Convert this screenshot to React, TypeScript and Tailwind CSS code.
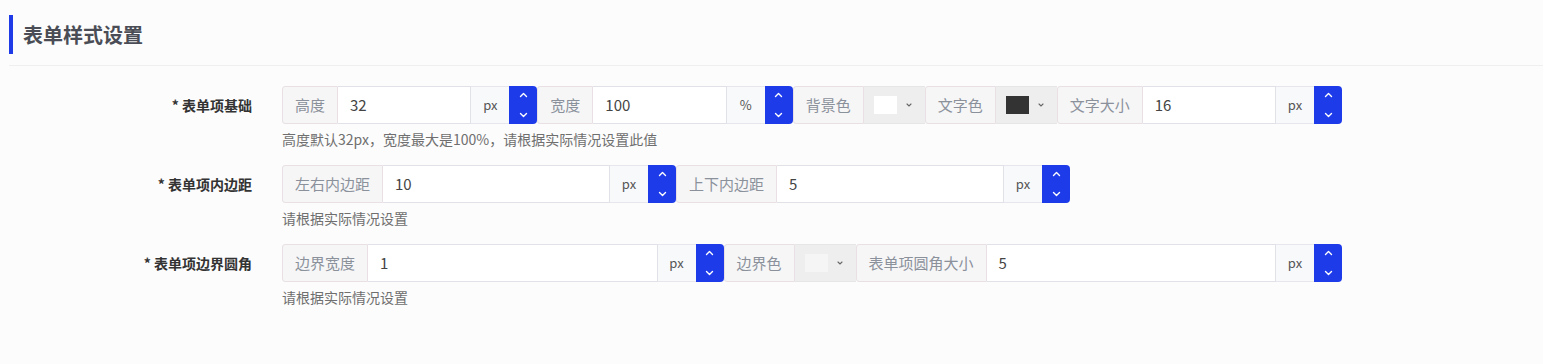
import React from "react";

const F = "font-['Noto_Sans_CJK_SC','Noto_Sans',sans-serif]";

function Addon({ text }: { text: string }) {
  return (
    <div className="flex h-full shrink-0 items-center rounded-l-[3px] border border-[#e8e0e4] bg-[#f6f6f7] px-3 text-[15px] text-[#8b919b]">
      {text}
    </div>
  );
}

function Chevron({ up }: { up?: boolean }) {
  return (
    <svg width="9" height="6" viewBox="0 0 9 6" fill="none">
      <polyline
        points={up ? "1.5,4.5 4.5,1.5 7.5,4.5" : "1.5,1.5 4.5,4.5 7.5,1.5"}
        stroke="white"
        strokeWidth="1.4"
        strokeLinecap="round"
        strokeLinejoin="round"
      />
    </svg>
  );
}

function NumberGroup({ label, value, unit }: { label: string; value: string; unit: string }) {
  return (
    <>
      <Addon text={label} />
      <div className="flex h-full min-w-0 flex-1 items-center border border-l-0 border-[#e1e1e8] bg-white px-3 text-[15px] text-[#444]">
        {value}
      </div>
      <div className="flex h-full w-[38px] shrink-0 items-center justify-center border-y border-[#e6e6ec] bg-[#f8f9fb] text-[13px] text-[#555]">
        {unit}
      </div>
      <div className="flex h-full w-[28px] shrink-0 flex-col items-center justify-between rounded-r-[4px] bg-[#1e3be9] py-[6px]">
        <Chevron up />
        <Chevron />
      </div>
    </>
  );
}

function ColorGroup({ label, swatch }: { label: string; swatch: string }) {
  return (
    <>
      <Addon text={label} />
      <div className="flex h-full w-[61px] shrink-0 items-center border-y border-[#e6e6e6] bg-[#eeeeee] pl-[10px]">
        <div className={`h-[18px] w-[23px] ${swatch}`} />
        <svg className="ml-[9px]" width="6" height="4" viewBox="0 0 6 4" fill="none">
          <polyline points="1,1 3,3 5,1" stroke="#666" strokeWidth="1.1" strokeLinecap="round" />
        </svg>
      </div>
    </>
  );
}

function Row({
  label,
  width,
  help,
  children,
}: {
  label: string;
  width: string;
  help: string;
  children: React.ReactNode;
}) {
  return (
    <div className="mb-[16px] flex">
      <div className="flex h-[38px] w-[282px] shrink-0 items-center justify-end pr-[30px] text-[14px] font-bold text-[#333]">
        {label}
      </div>
      <div>
        <div className={`flex h-[38px] ${width}`}>{children}</div>
        <div className="mt-[5px] text-[14px] leading-[20px] text-[#6f6f6f]">{help}</div>
      </div>
    </div>
  );
}

export default function App() {
  return (
    <div className={`${F} min-h-[364px] w-full bg-[#fcfcfc]`}>
      <div className="ml-[9px] flex items-center border-b border-[#efefef] pb-[11px] pt-[15px]">
        <div className="h-[39px] w-[4px] bg-[#1f3be8]" />
        <div className="ml-[10px] text-[20px] font-bold text-[#4a4d55]">表单样式设置</div>
      </div>
      <div className="pt-[20px]">
        <Row label="* 表单项基础" width="w-[1060px]" help="高度默认32px，宽度最大是100%，请根据实际情况设置此值">
          <NumberGroup label="高度" value="32" unit="px" />
          <NumberGroup label="宽度" value="100" unit="%" />
          <ColorGroup label="背景色" swatch="bg-white" />
          <ColorGroup label="文字色" swatch="bg-[#333333]" />
          <NumberGroup label="文字大小" value="16" unit="px" />
        </Row>
        <Row label="* 表单项内边距" width="w-[788px]" help="请根据实际情况设置">
          <NumberGroup label="左右内边距" value="10" unit="px" />
          <NumberGroup label="上下内边距" value="5" unit="px" />
        </Row>
        <Row label="* 表单项边界圆角" width="w-[1060px]" help="请根据实际情况设置">
          <NumberGroup label="边界宽度" value="1" unit="px" />
          <ColorGroup label="边界色" swatch="bg-[#f5f5f5]" />
          <NumberGroup label="表单项圆角大小" value="5" unit="px" />
        </Row>
      </div>
    </div>
  );
}
